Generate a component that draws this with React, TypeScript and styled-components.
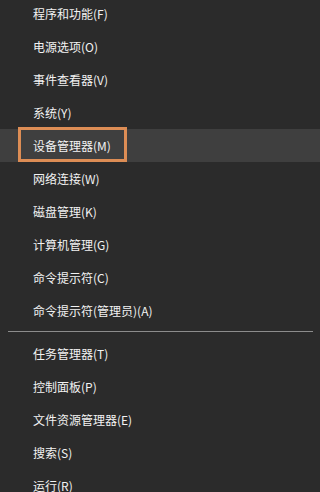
import React from "react";
import styled, { createGlobalStyle } from "styled-components";

const GlobalStyle = createGlobalStyle`
  html, body {
    margin: 0;
    padding: 0;
    background: #2b2b2b;
  }
`;

type Item = { label: string; active?: boolean };

const topItems: Item[] = [
  { label: "程序和功能(F)" },
  { label: "电源选项(O)" },
  { label: "事件查看器(V)" },
  { label: "系统(Y)" },
  { label: "设备管理器(M)", active: true },
  { label: "网络连接(W)" },
  { label: "磁盘管理(K)" },
  { label: "计算机管理(G)" },
  { label: "命令提示符(C)" },
  { label: "命令提示符(管理员)(A)" },
];

const bottomItems: Item[] = [
  { label: "任务管理器(T)" },
  { label: "控制面板(P)" },
  { label: "文件资源管理器(E)" },
  { label: "搜索(S)" },
  { label: "运行(R)" },
];

const App = () => {
  const renderItem = (item: Item) => (
    <Row key={item.label} $active={item.active}>
      <Label>{item.label}</Label>
      {item.active && <Marker />}
    </Row>
  );

  return (
    <Menu>
      <GlobalStyle />
      <Group>{topItems.map(renderItem)}</Group>
      <Separator />
      <Group>{bottomItems.map(renderItem)}</Group>
    </Menu>
  );
};

export default App;

const Menu = styled.div`
  width: 100%;
  height: 100vh;
  overflow: hidden;
  background: #2b2b2b;
  display: flex;
  flex-direction: column;
  font-family: "Noto Sans CJK SC", "Liberation Sans", sans-serif;
`;

const Group = styled.div`
  display: flex;
  flex-direction: column;
  &:first-child {
    margin-top: -3px;
  }
`;

const Row = styled.div<{ $active?: boolean }>`
  position: relative;
  height: 33px;
  flex-shrink: 0;
  display: flex;
  align-items: center;
  padding-left: 33px;
  background: ${(p) => (p.$active ? "#3f3f3f" : "transparent")};
`;

const Label = styled.span`
  font-size: 12px;
  line-height: 14px;
  color: #f2f2f2;
  white-space: nowrap;
`;

const Marker = styled.div`
  position: absolute;
  left: 18px;
  top: -2px;
  width: 109px;
  height: 35px;
  box-sizing: border-box;
  border: 3px solid #dd8d55;
  pointer-events: none;
`;

const Separator = styled.div`
  height: 1px;
  margin: 4px 7px 5px 8px;
  background: #8c8c8c;
  flex-shrink: 0;
`;
